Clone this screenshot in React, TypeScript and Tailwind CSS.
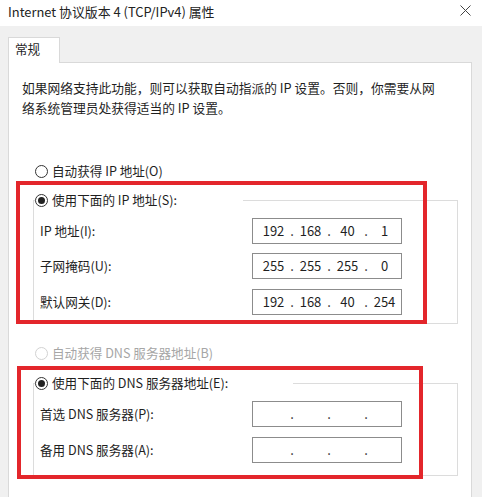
import React, { Fragment } from "react";

function Radio({ checked, disabled, label }: { checked?: boolean; disabled?: boolean; label: string }) {
  return (
    <div className="flex items-center h-[20px] whitespace-nowrap">
      <span
        className={
          disabled
            ? "w-[13px] h-[13px] rounded-full border border-[#d2d2d2] bg-white flex items-center justify-center"
            : "w-[13px] h-[13px] rounded-full border border-[#333333] bg-white flex items-center justify-center"
        }
      >
        {checked && <span className="w-[7px] h-[7px] rounded-full bg-[#222222]" />}
      </span>
      <span className={disabled ? "ml-[4px] text-[#a6a6a6]" : "ml-[4px] text-[#1f1f1f]"}>{label}</span>
    </div>
  );
}

function IpBox({ parts }: { parts: string[] }) {
  return (
    <div className="w-[150px] h-[26px] border border-[#8c8c8c] bg-white flex items-center pl-[4px] text-[13px] leading-[24px] text-[#1f1f1f]">
      {parts.map((p, i) => (
        <Fragment key={i}>
          <span className="w-[33px] text-center">{p}</span>
          {i < 3 && <span className="w-[4px] text-center">.</span>}
        </Fragment>
      ))}
    </div>
  );
}

function Row({ label, parts, extra }: { label: string; parts: string[]; extra?: string }) {
  return (
    <div className={"flex items-center h-[26px] " + (extra ?? "")}>
      <span className="w-[218px] pl-[6px] whitespace-nowrap">{label}</span>
      <IpBox parts={parts} />
    </div>
  );
}

export default function App() {
  return (
    <div className="relative w-[502px] h-[497px] overflow-hidden bg-white text-[#1f1f1f] text-[12.6px] leading-[20px] font-['Noto_Sans_CJK_SC',sans-serif]">
      {/* title bar */}
      <div className="h-[26px] flex items-center justify-between pl-[8px] pr-[31px] pb-[2px]">
        <span className="text-[12.9px] text-[#222222] whitespace-nowrap">Internet 协议版本 4 (TCP/IPv4) 属性</span>
        <svg width="11" height="11" viewBox="0 0 11 11" className="mb-[3px]">
          <path d="M0.5 0.5 L10.5 10.5 M10.5 0.5 L0.5 10.5" stroke="#444444" strokeWidth="1" fill="none" />
        </svg>
      </div>

      {/* body */}
      <div className="flex h-[490px]">
        <div className="w-[482px] bg-[#f0f0f0] pt-[11px] pl-[8px] pr-[10px] flex flex-col">
          <div className="relative z-10 -mb-px w-[52px] h-[26px] bg-white border border-b-0 border-[#d9d9d9] pl-[6px] leading-[22px] text-[12.6px]">
            常规
          </div>
          <div className="flex-1 bg-white border border-[#d9d9d9] flex flex-col">
            <p className="pt-[15px] pl-[13px] whitespace-nowrap leading-[19.5px] text-[12.75px]">
              如果网络支持此功能，则可以获取自动指派的 IP 设置。否则，你需要从网
              <br />
              络系统管理员处获得适当的 IP 设置。
            </p>

            <div className="mt-[44px] ml-[26px]">
              <Radio label="自动获得 IP 地址(O)" />
            </div>

            <fieldset className="mt-[9px] ml-[24px] w-[425px] border border-[#dcdcdc] pb-[8px]">
              <legend className="ml-[1px] w-[208px]">
                <Radio checked label="使用下面的 IP 地址(S):" />
              </legend>
              <div className="pt-[8px] flex flex-col">
                <Row label="IP 地址(I):" parts={["192", "168", "40", "1"]} />
                <Row label="子网掩码(U):" parts={["255", "255", "255", "0"]} extra="mt-[9px]" />
                <Row label="默认网关(D):" parts={["192", "168", "40", "254"]} extra="mt-[10px]" />
              </div>
            </fieldset>

            <div className="mt-[19px] ml-[26px]">
              <Radio disabled label="自动获得 DNS 服务器地址(B)" />
            </div>

            <fieldset className="mt-[10px] ml-[24px] w-[425px] border border-[#dcdcdc] pb-[12px]">
              <legend className="ml-[1px] w-[258px]">
                <Radio checked label="使用下面的 DNS 服务器地址(E):" />
              </legend>
              <div className="pt-[8px] flex flex-col">
                <Row label="首选 DNS 服务器(P):" parts={["", "", "", ""]} />
                <Row label="备用 DNS 服务器(A):" parts={["", "", "", ""]} extra="mt-[10px]" />
              </div>
            </fieldset>
          </div>
        </div>
        <div className="w-[20px] bg-white" />
      </div>

      {/* red annotation boxes */}
      <div className="absolute left-[16px] top-[181px] w-[411px] h-[143px] border-4 border-[#e3262b] pointer-events-none" />
      <div className="absolute left-[17px] top-[366px] w-[406px] h-[113px] border-4 border-[#e3262b] pointer-events-none" />
    </div>
  );
}
